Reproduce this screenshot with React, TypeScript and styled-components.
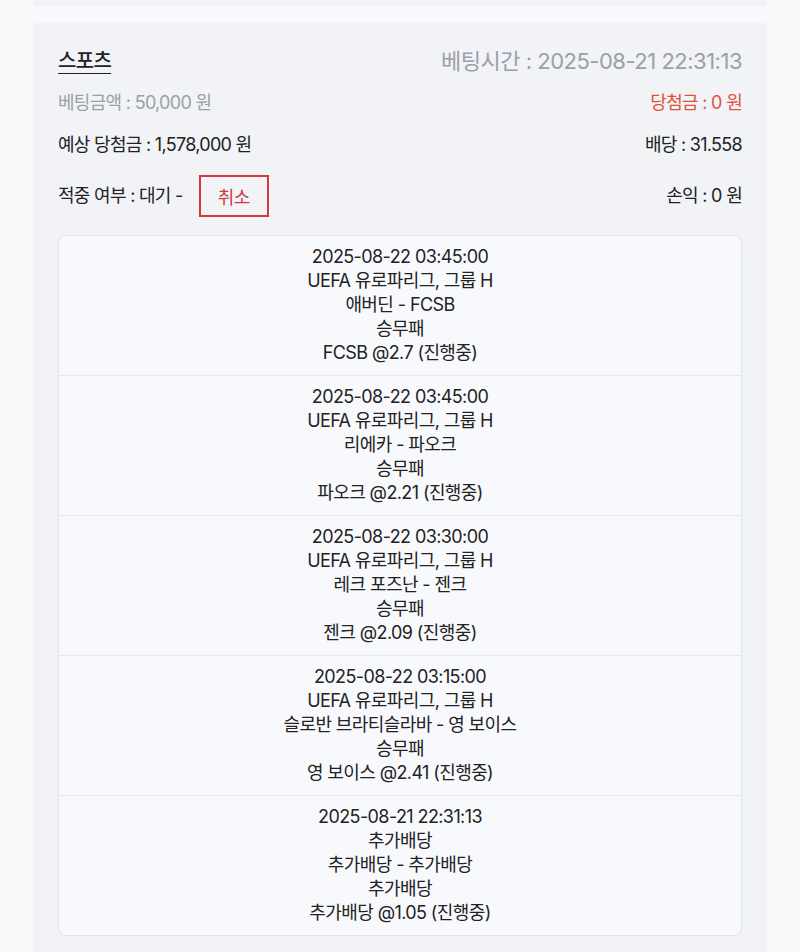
import styled, { createGlobalStyle } from "styled-components";

const GlobalStyle = createGlobalStyle`
  body {
    margin: 0;
    background-color: #f8f9fb;
    font-family: Inter, "Noto Sans CJK KR", sans-serif;
    color: #222;
  }
`;

const Page = styled.div`
  padding: 0 33px;
`;

const PrevCardEdge = styled.div`
  height: 6px;
  background-color: #f1f3f7;
  margin-bottom: 17px;
`;

const Card = styled.div`
  background-color: #f1f3f7;
  padding: 26px 25px 30px;
  display: flex;
  flex-direction: column;
  gap: 18px;
`;

const Row = styled.div`
  display: flex;
  justify-content: space-between;
  align-items: center;
  line-height: 24px;
  letter-spacing: -0.7px;
`;

const Title = styled.span`
  font-size: 20px;
  font-weight: 500;
  text-decoration: underline;
  text-decoration-thickness: 1px;
  text-underline-offset: 5px;
`;

const Text = styled.span<{ $tone?: "gray" | "red" | "large" }>`
  color: ${(p) => (p.$tone === "gray" || p.$tone === "large" ? "#9aa0a9" : p.$tone === "red" ? "#e2513e" : "#222")};
  font-size: ${(p) => (p.$tone === "large" ? "22px" : "18px")};
  letter-spacing: ${(p) => (p.$tone === "large" ? "-0.5px" : "-0.7px")};
`;

const Status = styled.div`
  display: flex;
  align-items: center;
  gap: 16px;
`;

const CancelButton = styled.button`
  width: 70px;
  height: 42px;
  border: 2px solid #d6373d;
  background: transparent;
  color: #d6373d;
  font-family: inherit;
  font-size: 18px;
  letter-spacing: -0.7px;
  padding: 0;
  cursor: pointer;
`;

const BetList = styled.div`
  background-color: #f8f9fc;
  border: 1px solid #e2e5ea;
  border-radius: 8px;
`;

const BetItem = styled.div`
  padding: 9px 0 10px;
  text-align: center;
  font-size: 18px;
  line-height: 24px;
  letter-spacing: -0.6px;
  border-bottom: 1px solid #e6e9ee;

  &:last-child {
    border-bottom: none;
  }
`;

const bets = [
  ["2025-08-22 03:45:00", "UEFA 유로파리그, 그룹 H", "애버딘 - FCSB", "승무패", "FCSB @2.7 (진행중)"],
  ["2025-08-22 03:45:00", "UEFA 유로파리그, 그룹 H", "리에카 - 파오크", "승무패", "파오크 @2.21 (진행중)"],
  ["2025-08-22 03:30:00", "UEFA 유로파리그, 그룹 H", "레크 포즈난 - 젠크", "승무패", "젠크 @2.09 (진행중)"],
  ["2025-08-22 03:15:00", "UEFA 유로파리그, 그룹 H", "슬로반 브라티슬라바 - 영 보이스", "승무패", "영 보이스 @2.41 (진행중)"],
  ["2025-08-21 22:31:13", "추가배당", "추가배당 - 추가배당", "추가배당", "추가배당 @1.05 (진행중)"],
];

export default function App() {
  return (
    <>
      <GlobalStyle />
      <Page>
        <PrevCardEdge />
        <Card>
          <Row>
            <Title>스포츠</Title>
            <Text $tone="large">베팅시간 : 2025-08-21 22:31:13</Text>
          </Row>
          <Row>
            <Text $tone="gray">베팅금액 : 50,000 원</Text>
            <Text $tone="red">당첨금 : 0 원</Text>
          </Row>
          <Row>
            <Text>예상 당첨금 : 1,578,000 원</Text>
            <Text>배당 : 31.558</Text>
          </Row>
          <Row>
            <Status>
              <Text>적중 여부 : 대기 -</Text>
              <CancelButton>취소</CancelButton>
            </Status>
            <Text>손익 : 0 원</Text>
          </Row>
          <BetList>
            {bets.map((lines, i) => (
              <BetItem key={i}>
                {lines.map((line, j) => (
                  <div key={j}>{line}</div>
                ))}
              </BetItem>
            ))}
          </BetList>
        </Card>
      </Page>
    </>
  );
}
